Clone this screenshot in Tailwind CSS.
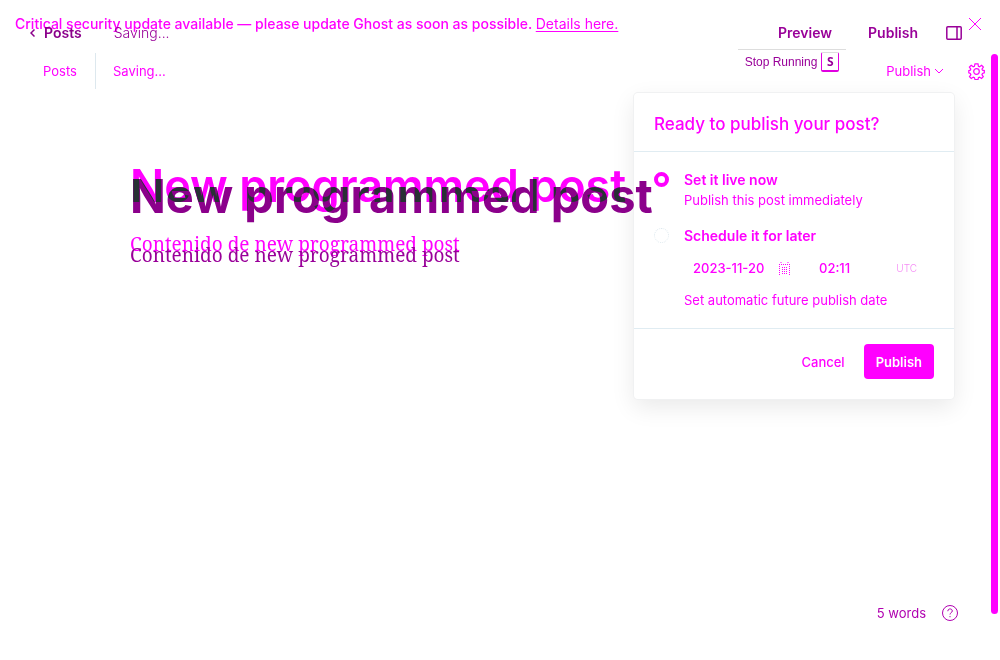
<!DOCTYPE html>
<html lang="en">
<head>
<meta charset="utf-8">
<title>New programmed post</title>
<script src="https://cdn.jsdelivr.net/npm/@tailwindcss/browser@4"></script>
</head>
<body class="bg-white">
<div class="relative isolate grid min-h-screen bg-white font-['Inter',sans-serif] text-[14px] leading-5 text-[#ff00ff]">

  <!-- Editor layer with the update banner and settings toolbar -->
  <section class="[grid-area:1/1] flex flex-col">
    <div class="flex h-12 items-center justify-between pr-[18px] pl-[15px]">
      <p class="font-medium">Critical security update available — please update Ghost as soon as possible. <a href="#" class="font-normal underline underline-offset-2">Details here.</a></p>
      <button type="button" aria-label="Close banner"><svg class="size-[14px]" viewBox="0 0 14 14" fill="none" stroke="currentColor" stroke-width="1"><path d="M1 1l12 12M13 1L1 13"/></svg></button>
    </div>
    <header class="flex h-[46px] items-center pr-[15px] pl-[43px] text-[13px]">
      <a href="#" class="flex h-9 w-[53px] items-center border-r border-[#dde8ee]">Posts</a>
      <span class="pl-[17px]">Saving...</span>
      <button type="button" class="ml-auto flex items-center gap-1">Publish<svg class="size-2" viewBox="0 0 8 8" fill="none" stroke="currentColor"><path d="M0 2l4 4 4-4"/></svg></button>
      <button type="button" aria-label="Settings" class="ml-[25px]"><svg class="size-[17px]" viewBox="0 0 17 17" fill="none" stroke="currentColor" stroke-width="1.2"><path d="M7 .8h3l.4 2.400 1.200.5 2-1.400 1.800 1.800-1.400 2 .5 1.100 1.800.4v2.300l-1.800.5-.6 1.300 1.400 2-1.800 1.800-2-1.400-1.100.6-.4 2H7l-.6-2-1.100-.6-2 1.400-1.800-1.800 1.400-2-.6-1.300-1.500-.5V7.600l1.500-.4.5-1.100-1.400-2 1.800-1.800 2 1.400 1.200-.5z"/><circle cx="8.500" cy="8.500" r="2.800"/></svg></button>
    </header>
    <main class="px-[130px] pt-[62px]">
      <h1 class="text-[45px] leading-[60px] font-semibold whitespace-nowrap">New programmed post</h1>
      <p class="pt-[14px] font-['Noto_Serif',Georgia,'Liberation_Serif',serif] text-[19px] leading-7">Contenido de new programmed post</p>
    </main>
  </section>

  <!-- Publish menu -->
  <form class="absolute top-[93px] right-[46px] w-[320px] rounded-[4px] bg-white shadow-[0_0_0_1px_#f0f1f2,0_8px_24px_rgba(0,0,0,0.09)]">
    <h2 class="border-b border-[#e0ecf2] px-5 pt-[19px] pb-[15px] text-[17px] leading-6 font-medium">Ready to publish your post?</h2>
    <div class="flex flex-col gap-4 px-5 pt-[18px] pb-[18px]">
      <div class="flex gap-[15px]">
        <input id="now" type="radio" name="when" checked class="mt-[2px] size-[15px] shrink-0 appearance-none rounded-full border border-dashed border-[#dde8ee] checked:border-4 checked:border-solid checked:border-[#ff00ff]">
        <label for="now" class="font-semibold">Set it live now<span class="block text-[13px] font-normal">Publish this post immediately</span></label>
      </div>
      <div class="flex gap-[15px]">
        <input id="later" type="radio" name="when" class="mt-[2px] size-[15px] shrink-0 appearance-none rounded-full border border-dotted border-[#dde8ee]">
        <div class="grow">
          <label for="later" class="font-semibold">Schedule it for later</label>
          <div class="mt-[6px] flex gap-[10px] text-[13px] font-medium">
            <div class="flex h-[32px] w-[116px] items-center justify-between px-[9px]">
              <input aria-label="Date" value="2023-11-20" class="w-[80px] outline-none">
              <svg class="size-[13px] shrink-0" viewBox="0 0 13 13" fill="none" stroke="currentColor" stroke-dasharray="1 1"><path d="M1 2.500h11M1.500 2v11M11.500 2v11M3 0v2M10 0v2M4 5.500h6M4 7.500h6M4 9.500h6M4 11.500h6"/></svg>
            </div>
            <div class="flex h-[32px] grow items-center justify-between pr-[17px] pl-[9px]">
              <input aria-label="Time" value="02:11" class="w-[50px] outline-none">
              <span class="text-[10px] font-light text-[#f58cf5]">UTC</span>
            </div>
          </div>
          <p class="mt-[6px] text-[13px] leading-5 font-normal">Set automatic future publish date</p>
        </div>
      </div>
    </div>
    <div class="flex items-center justify-end gap-[19px] border-t border-[#e0ecf2] px-5 pt-[15px] pb-5 text-[13px]">
      <button type="button" class="font-medium">Cancel</button>
      <button type="button" class="h-[35px] rounded-[4px] bg-[#ff00ff] px-3 font-semibold text-white">Publish</button>
    </div>
  </form>

  <!-- Editor layer with the preview toolbar -->
  <section class="pointer-events-none relative [grid-area:1/1] flex flex-col text-[#990099]">
    <header class="flex h-[65px] items-center pr-[38px] pl-[30px]">
      <a href="#" class="flex items-center gap-[9px] font-semibold text-[#8b008b]"><svg class="w-[5px]" viewBox="0 0 5 8" fill="none" stroke="currentColor" stroke-width="1.500"><path d="M4.500.5L1 4l3.500 3.500"/></svg>Posts</a>
      <span class="pl-8 font-light">Saving...</span>
      <button type="button" class="ml-auto font-semibold">Preview</button>
      <button type="button" class="ml-9 font-semibold">Publish</button>
      <button type="button" aria-label="Toggle sidebar" class="ml-7"><svg class="size-4" viewBox="0 0 16 16" fill="none" stroke="currentColor" stroke-width="1.500"><rect x=".8" y="1.800" width="14.400" height="12.400" rx="1"/><path d="M11 2v12"/></svg></button>
    </header>
    <main class="grow px-[130px] pt-[101px]">
      <h1 class="text-[47px] leading-[60px] font-bold whitespace-nowrap text-[#8b008b]">New programmed post</h1>
      <p class="pt-[15px] font-['Noto_Serif',Georgia,'Liberation_Serif',serif] text-[19px] leading-7">Contenido de new programmed post</p>
    </main>
    <footer class="mb-[37px] flex h-5 items-center justify-end gap-4 pr-[42px] text-[13px] text-[#b000b0]">
      <span>5 words</span>
      <button type="button" aria-label="Help"><svg class="size-4" viewBox="0 0 16 16" fill="none" stroke="currentColor"><circle cx="8" cy="8" r="7.500"/><path d="M5.800 6.200c0-3 4.500-3 4.500-.2 0 1.600-2.300 1.700-2.300 3.500M8 11v1.200"/></svg></button>
    </footer>
  </section>

  <!-- Darkens the strokes that both titles share -->
  <div aria-hidden="true" data-title="New programmed post" class="pointer-events-none absolute top-[156px] left-[130px] h-[75px] w-[560px] bg-black leading-[60px] whitespace-nowrap mix-blend-difference before:absolute before:inset-0 before:text-[45px] before:font-semibold before:text-white before:content-[attr(data-title)] after:absolute after:inset-0 after:bg-black after:pt-[10px] after:text-[47px] after:font-bold after:text-[#633056] after:mix-blend-multiply after:content-[attr(data-title)]"></div>

  <aside class="absolute top-[49px] right-[154px] flex h-7 w-[108px] items-start justify-center border-t border-[#dddddd] pt-[2px] font-['Liberation_Sans',sans-serif] text-[12px] text-[#990099]">
    <button type="button" class="flex items-start gap-1">Stop Running<kbd class="flex h-5 w-[18px] items-center justify-center rounded-[2px] border border-b-2 border-[#e000e0] border-t-[#dddddd] font-['Open_Sans',sans-serif] text-[12px] font-bold">S</kbd></button>
  </aside>
  <div class="absolute top-[54px] right-[2px] bottom-[46px] w-[7px] rounded-full bg-[#ff00ff]"></div>
</div>
</body>
</html>
